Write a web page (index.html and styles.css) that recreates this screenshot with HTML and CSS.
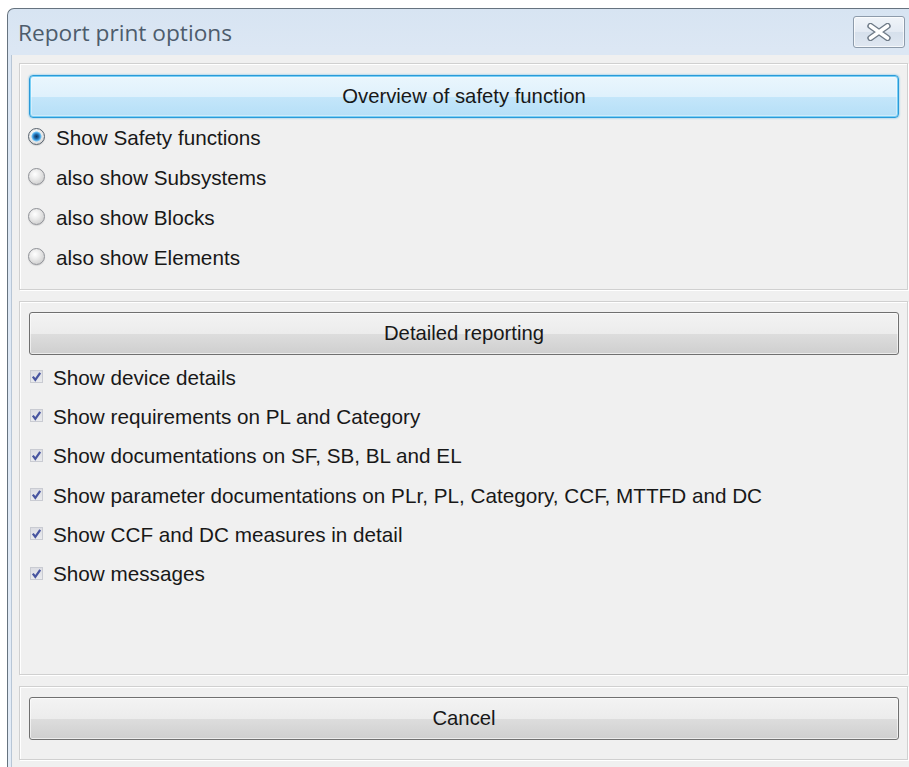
FILE: index.html
```html
<!DOCTYPE html>
<html lang="en">
<head>
<meta charset="utf-8">
<title>Report print options</title>
<link rel="stylesheet" href="styles.css">
</head>
<body>
<div class="window">
  <div class="titlebar">
    <span class="title">Report print options</span>
    <button class="close" type="button" aria-label="Close">
      <svg width="24" height="18" viewBox="0 0 24 18">
        <path d="M3.5 3 L20.5 15 M20.5 3 L3.5 15" stroke="#6f7b88" stroke-width="6.4" stroke-linecap="round"/>
        <path d="M3.5 3 L20.5 15 M20.5 3 L3.5 15" stroke="#ffffff" stroke-width="3.6" stroke-linecap="round"/>
      </svg>
    </button>
  </div>
  <div class="client">
    <div class="group group-overview">
      <button class="btn btn-default" type="button">Overview of safety function</button>
      <ul class="options">
        <li><span class="radio checked"></span>Show Safety functions</li>
        <li><span class="radio"></span>also show Subsystems</li>
        <li><span class="radio"></span>also show Blocks</li>
        <li><span class="radio"></span>also show Elements</li>
      </ul>
    </div>
    <div class="group group-detail">
      <button class="btn" type="button">Detailed reporting</button>
      <ul class="checks">
        <li><span class="check"><svg width="13" height="13" viewBox="0 0 13 13"><path d="M2.8 6.6 L5.3 9.8 L10.2 2.8" fill="none" stroke="#4855a0" stroke-width="2.2"/></svg></span>Show device details</li>
        <li><span class="check"><svg width="13" height="13" viewBox="0 0 13 13"><path d="M2.8 6.6 L5.3 9.8 L10.2 2.8" fill="none" stroke="#4855a0" stroke-width="2.2"/></svg></span>Show requirements on PL and Category</li>
        <li><span class="check"><svg width="13" height="13" viewBox="0 0 13 13"><path d="M2.8 6.6 L5.3 9.8 L10.2 2.8" fill="none" stroke="#4855a0" stroke-width="2.2"/></svg></span>Show documentations on SF, SB, BL and EL</li>
        <li><span class="check"><svg width="13" height="13" viewBox="0 0 13 13"><path d="M2.8 6.6 L5.3 9.8 L10.2 2.8" fill="none" stroke="#4855a0" stroke-width="2.2"/></svg></span>Show parameter documentations on PLr, PL, Category, CCF, MTTFD and DC</li>
        <li><span class="check"><svg width="13" height="13" viewBox="0 0 13 13"><path d="M2.8 6.6 L5.3 9.8 L10.2 2.8" fill="none" stroke="#4855a0" stroke-width="2.2"/></svg></span>Show CCF and DC measures in detail</li>
        <li><span class="check"><svg width="13" height="13" viewBox="0 0 13 13"><path d="M2.8 6.6 L5.3 9.8 L10.2 2.8" fill="none" stroke="#4855a0" stroke-width="2.2"/></svg></span>Show messages</li>
      </ul>
    </div>
    <div class="group group-actions">
      <button class="btn" type="button">Cancel</button>
    </div>
  </div>
</div>
</body>
</html>
```

FILE: styles.css
```css
html, body {
  margin: 0;
  padding: 0;
  background: #ffffff;
  height: 767px;
  overflow: hidden;
}

body {
  font-family: "Liberation Sans", Arial, sans-serif;
  font-size: 20.7px;
  color: #181818;
}

/* window frame */
.window {
  margin: 8px 0 0 7px;
  width: 902px;
  height: 770px;
  box-sizing: border-box;
  border-top: 1px solid #66737f;
  border-left: 1px solid #66737f;
  border-top-left-radius: 7px;
  background: linear-gradient(#d7e4f2 0, #dce7f4 40px, #e3ecf7 100%);
  padding-left: 4px;
  display: flex;
  flex-direction: column;
}

.titlebar {
  height: 46px;
  display: flex;
  align-items: center;
  margin-left: -4px;
  flex: none;
}

.title {
  padding-left: 10px;
  font-family: "Open Sans", "Noto Sans", sans-serif;
  font-size: 22.7px;
  color: #4d5c6c;
  margin-top: 1px;
}

.close {
  margin-left: auto;
  margin-right: 4px;
  width: 52px;
  height: 32px;
  box-sizing: border-box;
  border: 1px solid #8d9bab;
  border-radius: 3px;
  background: linear-gradient(#f0f4f9 0, #e3eaf3 50%, #d6e0ec 51%, #dfe7f1 100%);
  box-shadow: inset 0 0 0 1px rgba(255, 255, 255, 0.7);
  padding: 0;
  display: flex;
  align-items: center;
  justify-content: center;
}

/* client area */
.client {
  flex: 1;
  background: #f0f0f0;
  border-left: 1px solid #b8c6d6;
  margin-left: -1px;
  padding: 8px 1px 0 7px;
  display: flex;
  flex-direction: column;
}

.group {
  box-sizing: border-box;
  border: 1px solid #d0d0d0;
  box-shadow: inset 1px 1px 0 #ffffff, 1px 1px 0 #ffffff;
  padding: 11px 8px 0 9px;
}

.group-overview {
  height: 227px;
}

.group-detail {
  height: 374px;
  margin-top: 11px;
  padding-top: 10px;
}

.group-actions {
  height: 74px;
  margin-top: 11px;
  padding-top: 10px;
}

/* push buttons */
.btn {
  display: block;
  width: 100%;
  height: 43px;
  box-sizing: border-box;
  border: 1px solid #707070;
  border-radius: 3px;
  background: linear-gradient(#f3f3f3 0, #ececec 50%, #dddddd 51%, #cfcfcf 100%);
  box-shadow: inset 0 0 0 1px rgba(255, 255, 255, 0.6);
  font-family: "Liberation Sans", Arial, sans-serif;
  font-size: 20.3px;
  color: #181818;
  padding: 0;
}

.btn-default {
  border: 1px solid #2b9ad8;
  border-radius: 4px;
  background: linear-gradient(#eaf6fd 0, #dff1fc 50%, #c4e6fa 51%, #b5dff7 100%);
  box-shadow: inset 0 0 0 1px #79cff5, inset 0 0 0 2px rgba(255, 255, 255, 0.35), 0 0 2px #48b4e8;
}

/* option lists */
.options, .checks {
  list-style: none;
  margin: 0;
  padding: 0;
}

.options li {
  height: 40px;
  display: flex;
  align-items: center;
}

.checks {
  margin-top: 3px;
}

.checks li {
  height: 39.3px;
  display: flex;
  align-items: center;
}

.radio {
  flex: none;
  width: 17px;
  height: 17px;
  box-sizing: border-box;
  border-radius: 50%;
  border: 1px solid #8e9096;
  background: radial-gradient(circle at 40% 35%, #ffffff 0, #ececec 35%, #d2d2d2 75%, #bdbdbd 100%);
  box-shadow: 0 1px 1px rgba(0, 0, 0, 0.12);
  margin: -3px 11px 0 -1px;
}

.radio.checked {
  border-color: #55606c;
  background:
    radial-gradient(circle at 50% 50%, #0e3560 0, #1f5f9c 2px, #3b9be0 3.6px, #8fd0f5 4.8px, rgba(255, 255, 255, 0) 5.4px),
    radial-gradient(circle at 40% 35%, #ffffff 0, #e4e4e4 60%, #c5c5c5 100%);
}

.check {
  flex: none;
  width: 13px;
  height: 13px;
  box-sizing: border-box;
  border: 1px solid #c9cbd2;
  background: linear-gradient(#dcdde3, #eaebee);
  margin: -2px 10px 0 1px;
  display: flex;
  align-items: center;
  justify-content: center;
}

.check svg {
  display: block;
  margin: -1px;
}
```
